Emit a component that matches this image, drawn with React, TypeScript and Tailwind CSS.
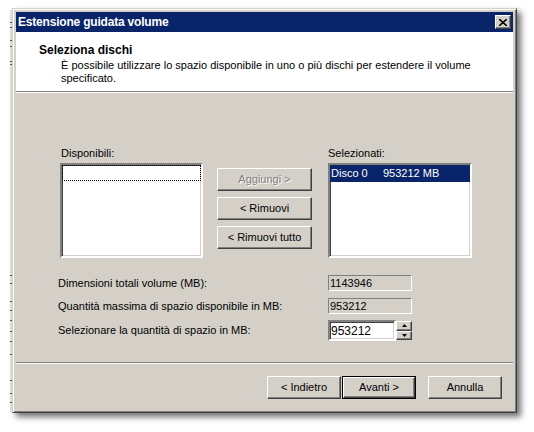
import React from "react";

const raised =
  "border border-t-white border-l-white border-b-[#404040] border-r-[#404040] shadow-[inset_-1px_-1px_0_#808080]";
const sunken =
  "border-2 border-t-[#808080] border-l-[#808080] border-b-white border-r-white shadow-[inset_1px_1px_0_#404040,inset_-1px_-1px_0_#d4d0c8]";

function Separator() {
  return (
    <div>
      <div className="h-px bg-[#808080]" />
      <div className="h-px bg-white" />
    </div>
  );
}

function WinButton({
  label,
  disabled,
  isDefault,
  className = "",
}: {
  label: string;
  disabled?: boolean;
  isDefault?: boolean;
  className?: string;
}) {
  const inner = (
    <div
      className={`h-full w-full flex items-center justify-center bg-[#d4d0c8] ${raised} ${
        disabled ? "text-[#808080] [text-shadow:1px_1px_0_#ffffff]" : "text-black"
      }`}
    >
      {label}
    </div>
  );
  if (isDefault) {
    return <div className={`border border-black ${className}`}>{inner}</div>;
  }
  return <div className={className}>{inner}</div>;
}

function ReadOnlyBox({ value }: { value: string }) {
  return (
    <div className="w-[84px] h-[16px] border border-t-[#808080] border-l-[#808080] border-b-white border-r-white bg-[#d4d0c8] flex items-center pl-[1px] leading-none">
      {value}
    </div>
  );
}

function SpinArrow({ up }: { up?: boolean }) {
  return (
    <div className={`flex-1 flex items-center justify-center bg-[#d4d0c8] ${raised}`}>
      <svg width="5" height="3" viewBox="0 0 5 3">
        {up ? <path d="M2.5 0 L5 3 L0 3 Z" fill="#000" /> : <path d="M0 0 L5 0 L2.5 3 Z" fill="#000" />}
      </svg>
    </div>
  );
}

const leftMarks = [22, 27, 40, 46, 61, 64, 275, 283, 301, 310, 320, 331, 341, 354, 380, 393, 402];

export default function App() {
  return (
    <div
      className="relative w-[534px] h-[432px] bg-white overflow-hidden text-[11px] text-black"
      style={{ fontFamily: '"Liberation Sans", Arial, sans-serif' }}
    >
      {/* bits of the window behind */}
      <div className="absolute left-[10px] top-[10px] w-[4px] h-[402px] bg-[#e4e2dc]" />
      {leftMarks.map((y) => (
        <div key={y} className="absolute left-[10px] w-[3px] h-[1px] bg-[#555]" style={{ top: y }} />
      ))}

      {/* window */}
      <div className="absolute left-[12px] top-[8px] w-[505px] h-[405px] bg-[#d4d0c8] border border-t-[#d4d0c8] border-l-[#d4d0c8] border-b-[#404040] border-r-[#404040] shadow-[inset_1px_1px_0_#fff,inset_-1px_-1px_0_#808080,4px_4px_6px_rgba(0,0,0,0.55)] p-[3px] flex flex-col">
        {/* title bar */}
        <div className="h-[20px] bg-[#0a246a] flex items-center justify-between pl-[2px] pr-[2px]">
          <span className="text-white font-bold text-[12px] tracking-[-0.2px]">Estensione guidata volume</span>
          <div className={`w-[16px] h-[14px] bg-[#d4d0c8] flex items-center justify-center ${raised}`}>
            <svg width="8" height="7" viewBox="0 0 8 7">
              <path d="M0 0 L8 7 M8 0 L0 7" stroke="#000" strokeWidth="1.6" />
            </svg>
          </div>
        </div>

        {/* header */}
        <div className="h-[59px] bg-white pl-[23px] pt-[12px]">
          <div className="font-bold text-[12px] leading-[13px]">Seleziona dischi</div>
          <div className="pl-[22px] pt-[2px] leading-[13px] w-[474px]">
            È possibile utilizzare lo spazio disponibile in uno o più dischi per estendere il volume specificato.
          </div>
        </div>
        <Separator />

        {/* body */}
        <div className="flex-1 flex flex-col">
          <div className="pl-[44px] pt-[54px] flex">
            <div className="w-[143px] flex flex-col">
              <div className="h-[13px] leading-[13px] pl-[1px] mb-[3px]">Disponibili:</div>
              <div className={`h-[95px] bg-white ${sunken} p-0`}>
                <div className="h-[16px] border border-dotted border-black" />
              </div>
            </div>
            <div className="w-[95px] ml-[14px] pt-[21px] flex flex-col gap-[6px]">
              <WinButton label="Aggiungi >" disabled className="h-[23px]" />
              <WinButton label="< Rimuovi" className="h-[23px]" />
              <WinButton label="< Rimuovi tutto" className="h-[23px]" />
            </div>
            <div className="w-[144px] ml-[16px] flex flex-col">
              <div className="h-[13px] leading-[13px] mb-[3px]">Selezionati:</div>
              <div className={`h-[95px] bg-white ${sunken}`}>
                <div className="h-[17px] bg-[#0a246a] text-white flex items-center pl-[1px]">
                  <span className="w-[52px]">Disco 0</span>
                  <span>953212 MB</span>
                </div>
              </div>
            </div>
          </div>

          {/* fields */}
          <div className="pl-[42px] mt-[17px] flex flex-col">
            <div className="flex items-center h-[16px]">
              <span className="w-[270px]">Dimensioni totali volume (MB):</span>
              <ReadOnlyBox value="1143946" />
            </div>
            <div className="flex items-center h-[16px] mt-[7px]">
              <span className="w-[270px]">Quantità massima di spazio disponibile in MB:</span>
              <ReadOnlyBox value="953212" />
            </div>
            <div className="flex items-center h-[21px] mt-[6px]">
              <span className="w-[270px]">Selezionare la quantità di spazio in MB:</span>
              <div className="flex h-[21px] w-[84px]">
                <div className={`flex-1 bg-white ${sunken} flex items-center pl-[1px] text-[12px]`}>953212</div>
                <div className="w-[16px] flex flex-col py-[1px]">
                  <SpinArrow up />
                  <SpinArrow />
                </div>
              </div>
            </div>
          </div>

          <div className="mt-[21px]">
            <Separator />
          </div>

          {/* footer buttons */}
          <div className="flex justify-end pr-[11px] pt-[12px]">
            <WinButton label="< Indietro" className="w-[74px] h-[23px]" />
            <WinButton label="Avanti >" isDefault className="w-[74px] h-[23px] ml-[1px]" />
            <WinButton label="Annulla" className="w-[74px] h-[23px] ml-[12px]" />
          </div>
        </div>
      </div>
    </div>
  );
}
